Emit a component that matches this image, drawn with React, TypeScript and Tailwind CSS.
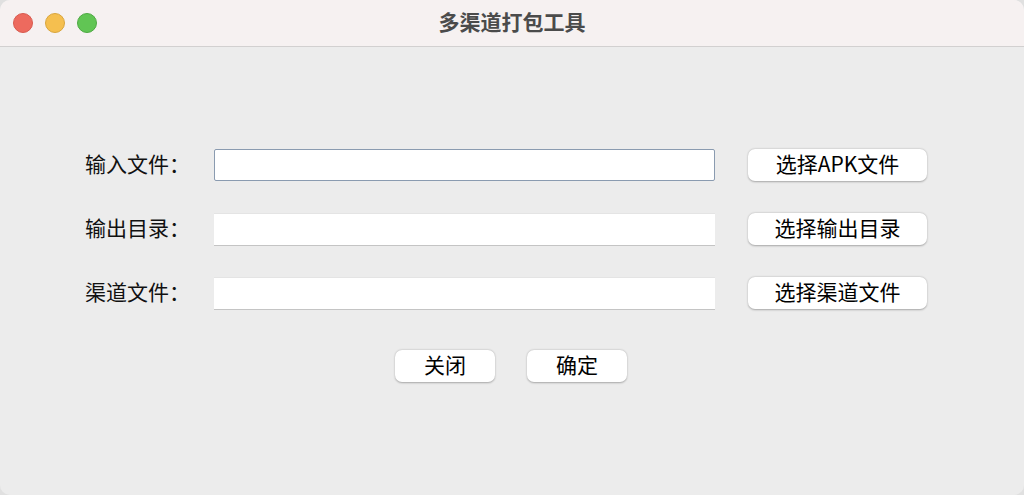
import React from 'react'

const font = { fontFamily: '"Noto Sans CJK SC", "Noto Sans", sans-serif' }

type RowProps = {
  label: string
  action: string
  focused?: boolean
}

const btn =
  'bg-white rounded-[7px] shadow-[0_0.5px_2px_rgba(0,0,0,0.3)] text-[21px] text-black leading-none pb-[3px]'

const Row = ({ label, action, focused }: RowProps) => (
  <div className="flex items-center h-8">
    <div className="w-[129px] pl-[85px] pb-[3px] box-content text-[21px] text-[#111] whitespace-nowrap leading-none">
      {label}
    </div>
    <div
      className={
        focused
          ? 'w-[501px] h-8 bg-white border border-[#8a9bb0] rounded-[2px]'
          : 'w-[501px] h-8 bg-white border-t border-[#e4e4e4] shadow-[0_1px_0_#c4c4c4]'
      }
    />
    <button className={`ml-[33px] w-[179px] h-8 ${btn}`}>{action}</button>
  </div>
)

export default function App() {
  return (
    <div className="w-[1024px] h-[495px] bg-[#e0e0e0]" style={font}>
      <div className="w-full h-full rounded-[10px] overflow-hidden flex flex-col bg-[#ececec]">
        {/* Title bar */}
        <div className="h-[47px] bg-[#f6f1f1] border-b border-[#d2d0d0] flex items-center relative shrink-0">
          <div className="flex items-center gap-[12px] pl-[13px]">
            <span className="w-5 h-5 rounded-full bg-[#ed6a5e] border border-[#d85a4f]" />
            <span className="w-5 h-5 rounded-full bg-[#f5bf4f] border border-[#d9a53c]" />
            <span className="w-5 h-5 rounded-full bg-[#61c554] border border-[#4ea943]" />
          </div>
          <div className="absolute inset-0 flex items-center justify-center text-[21px] font-bold text-[#4b4b4b] pb-[3px]">
            多渠道打包工具
          </div>
        </div>

        {/* Form */}
        <div className="flex flex-col gap-8 pt-[102px]">
          <Row label="输入文件：" action="选择APK文件" focused />
          <Row label="输出目录：" action="选择输出目录" />
          <Row label="渠道文件：" action="选择渠道文件" />
        </div>

        <div className="flex justify-center gap-8 mt-[41px] pr-[2px]">
          <button className={`w-[100px] h-8 ${btn}`}>关闭</button>
          <button className={`w-[100px] h-8 ${btn}`}>确定</button>
        </div>
      </div>
    </div>
  )
}
